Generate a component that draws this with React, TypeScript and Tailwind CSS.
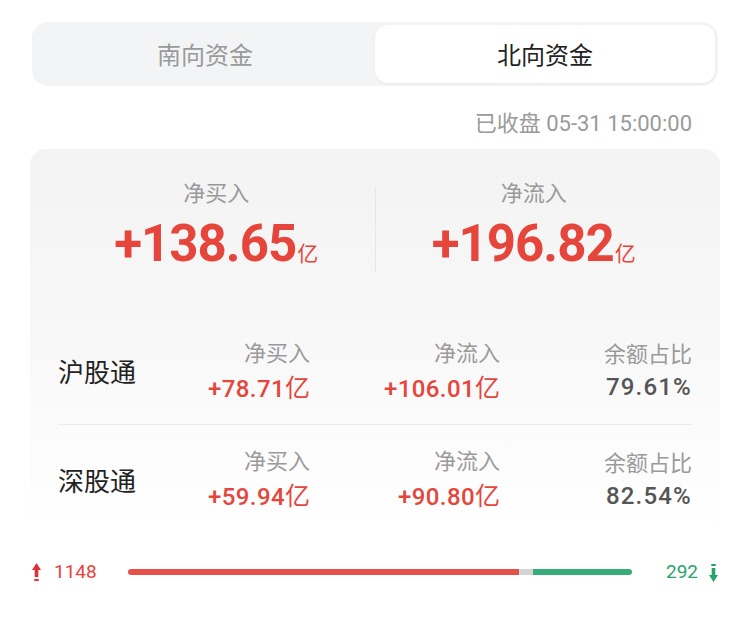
import React from "react";

const cjk = "font-['Noto_Sans_CJK_SC',sans-serif]";
const num = "font-['Roboto','Noto_Sans_CJK_SC',sans-serif]";

type Row = {
  name: string;
  buy: string;
  flow: string;
  ratio: string;
};

const rows: Row[] = [
  { name: "沪股通", buy: "+78.71", flow: "+106.01", ratio: "79.61%" },
  { name: "深股通", buy: "+59.94", flow: "+90.80", ratio: "82.54%" },
];

function UpArrow() {
  return (
    <svg width="9" height="19" viewBox="0 0 9 19" className="shrink-0">
      <path d="M4.5 0 L9 7 L0 7 Z" fill="#e0313a" />
      <rect x="2.7" y="6" width="3.6" height="8" fill="#e0313a" />
      <rect x="2.2" y="16" width="4.6" height="2" rx="0.6" fill="#e0313a" />
    </svg>
  );
}

function DownArrow() {
  return (
    <svg width="9" height="19" viewBox="0 0 9 19" className="shrink-0">
      <rect x="2.2" y="1" width="4.6" height="2" rx="0.6" fill="#27a36a" />
      <rect x="2.7" y="5" width="3.6" height="8" fill="#27a36a" />
      <path d="M4.5 19 L9 12 L0 12 Z" fill="#27a36a" />
    </svg>
  );
}

function Stat({ label, value }: { label: string; value: string }) {
  return (
    <div className="flex-1 flex flex-col items-center">
      <div className={`${cjk} text-[22px] leading-[28px] text-[#999]`}>{label}</div>
      <div className="mt-[9px] flex items-baseline text-[#e6453c] leading-[60px]">
        <span className={`${num} text-[51px] font-bold tracking-[-1px]`}>{value}</span>
        <span className={`${cjk} text-[21px] ml-[1px]`}>亿</span>
      </div>
    </div>
  );
}

function Cell({ label, value, tone }: { label: string; value: string; tone: "red" | "gray" }) {
  return (
    <div className="flex flex-col items-end">
      <div className={`${cjk} text-[22px] leading-[28px] text-[#9a9a9a]`}>{label}</div>
      <div
        className={`mt-[5px] ${num} text-[24px] leading-[32px] font-medium ${
          tone === "red" ? "text-[#e6453c] tracking-[0.4px]" : "text-[#555] tracking-[1.2px]"
        }`}
      >
        {value}
        {tone === "red" && (
          <span className={`${cjk} font-normal tracking-normal text-[25px]`}>亿</span>
        )}
      </div>
    </div>
  );
}

export default function App() {
  return (
    <div className="w-[750px] h-[622px] bg-white overflow-hidden">
      {/* tabs */}
      <div className="mx-[32px] mt-[22px] h-[64px] rounded-[16px] bg-[#f3f4f6] p-[3px] flex">
        <div className={`flex-1 flex items-center justify-center ${cjk} text-[24px] text-[#9a9a9a]`}>
          南向资金
        </div>
        <div
          className={`flex-1 flex items-center justify-center rounded-[13px] bg-white shadow-[0_1px_3px_rgba(0,0,0,0.05)] ${cjk} text-[24px] text-[#222]`}
        >
          北向资金
        </div>
      </div>

      {/* timestamp */}
      <div className={`mt-[21px] pr-[58px] text-right text-[22px] leading-[28px] text-[#9a9a9a] ${num}`}>
        <span className={cjk}>已收盘</span> 05-31 15:00:00
      </div>

      {/* card */}
      <div className="mx-[30px] mt-[11px] rounded-[16px] bg-linear-to-b from-[#f3f3f3] via-[#f8f8f8] to-white px-[28px] pt-[28px]">
        <div className="flex items-stretch pb-[35px]">
          <Stat label="净买入" value="+138.65" />
          <div className="w-px bg-[#e6e6e6] my-[10px]" />
          <Stat label="净流入" value="+196.82" />
        </div>

        {rows.map((r, i) => (
          <div
            key={r.name}
            className={`flex items-center h-[108px] ${i === 0 ? "border-b border-[#ececec]" : ""}`}
          >
            <div className={`flex-1 ${cjk} text-[26px] text-[#222]`}>{r.name}</div>
            <div className="w-[160px]">
              <Cell label="净买入" value={r.buy} tone="red" />
            </div>
            <div className="w-[190px]">
              <Cell label="净流入" value={r.flow} tone="red" />
            </div>
            <div className="w-[192px]">
              <Cell label="余额占比" value={r.ratio} tone="gray" />
            </div>
          </div>
        ))}
      </div>

      {/* up / down bar */}
      <div className="mt-[29px] px-[32px] h-[20px] flex items-center">
        <div className="w-[65px] flex items-center gap-[13px]">
          <UpArrow />
          <span className={`${num} text-[19px] text-[#e6453c]`}>1148</span>
        </div>
        <div className="flex-1 mx-[31px] flex items-center h-[6px]">
          <div className="h-full rounded-l-full bg-[#e5504a]" style={{ flexGrow: 1148 }} />
          <div className="h-full w-[14px] bg-[#d4d4d4]" />
          <div className="h-full rounded-r-full bg-[#36ad78]" style={{ flexGrow: 292 }} />
        </div>
        <div className="w-[55px] flex items-center justify-end gap-[11px]">
          <span className={`${num} text-[19px] text-[#27a36a]`}>292</span>
          <DownArrow />
        </div>
      </div>
    </div>
  );
}
